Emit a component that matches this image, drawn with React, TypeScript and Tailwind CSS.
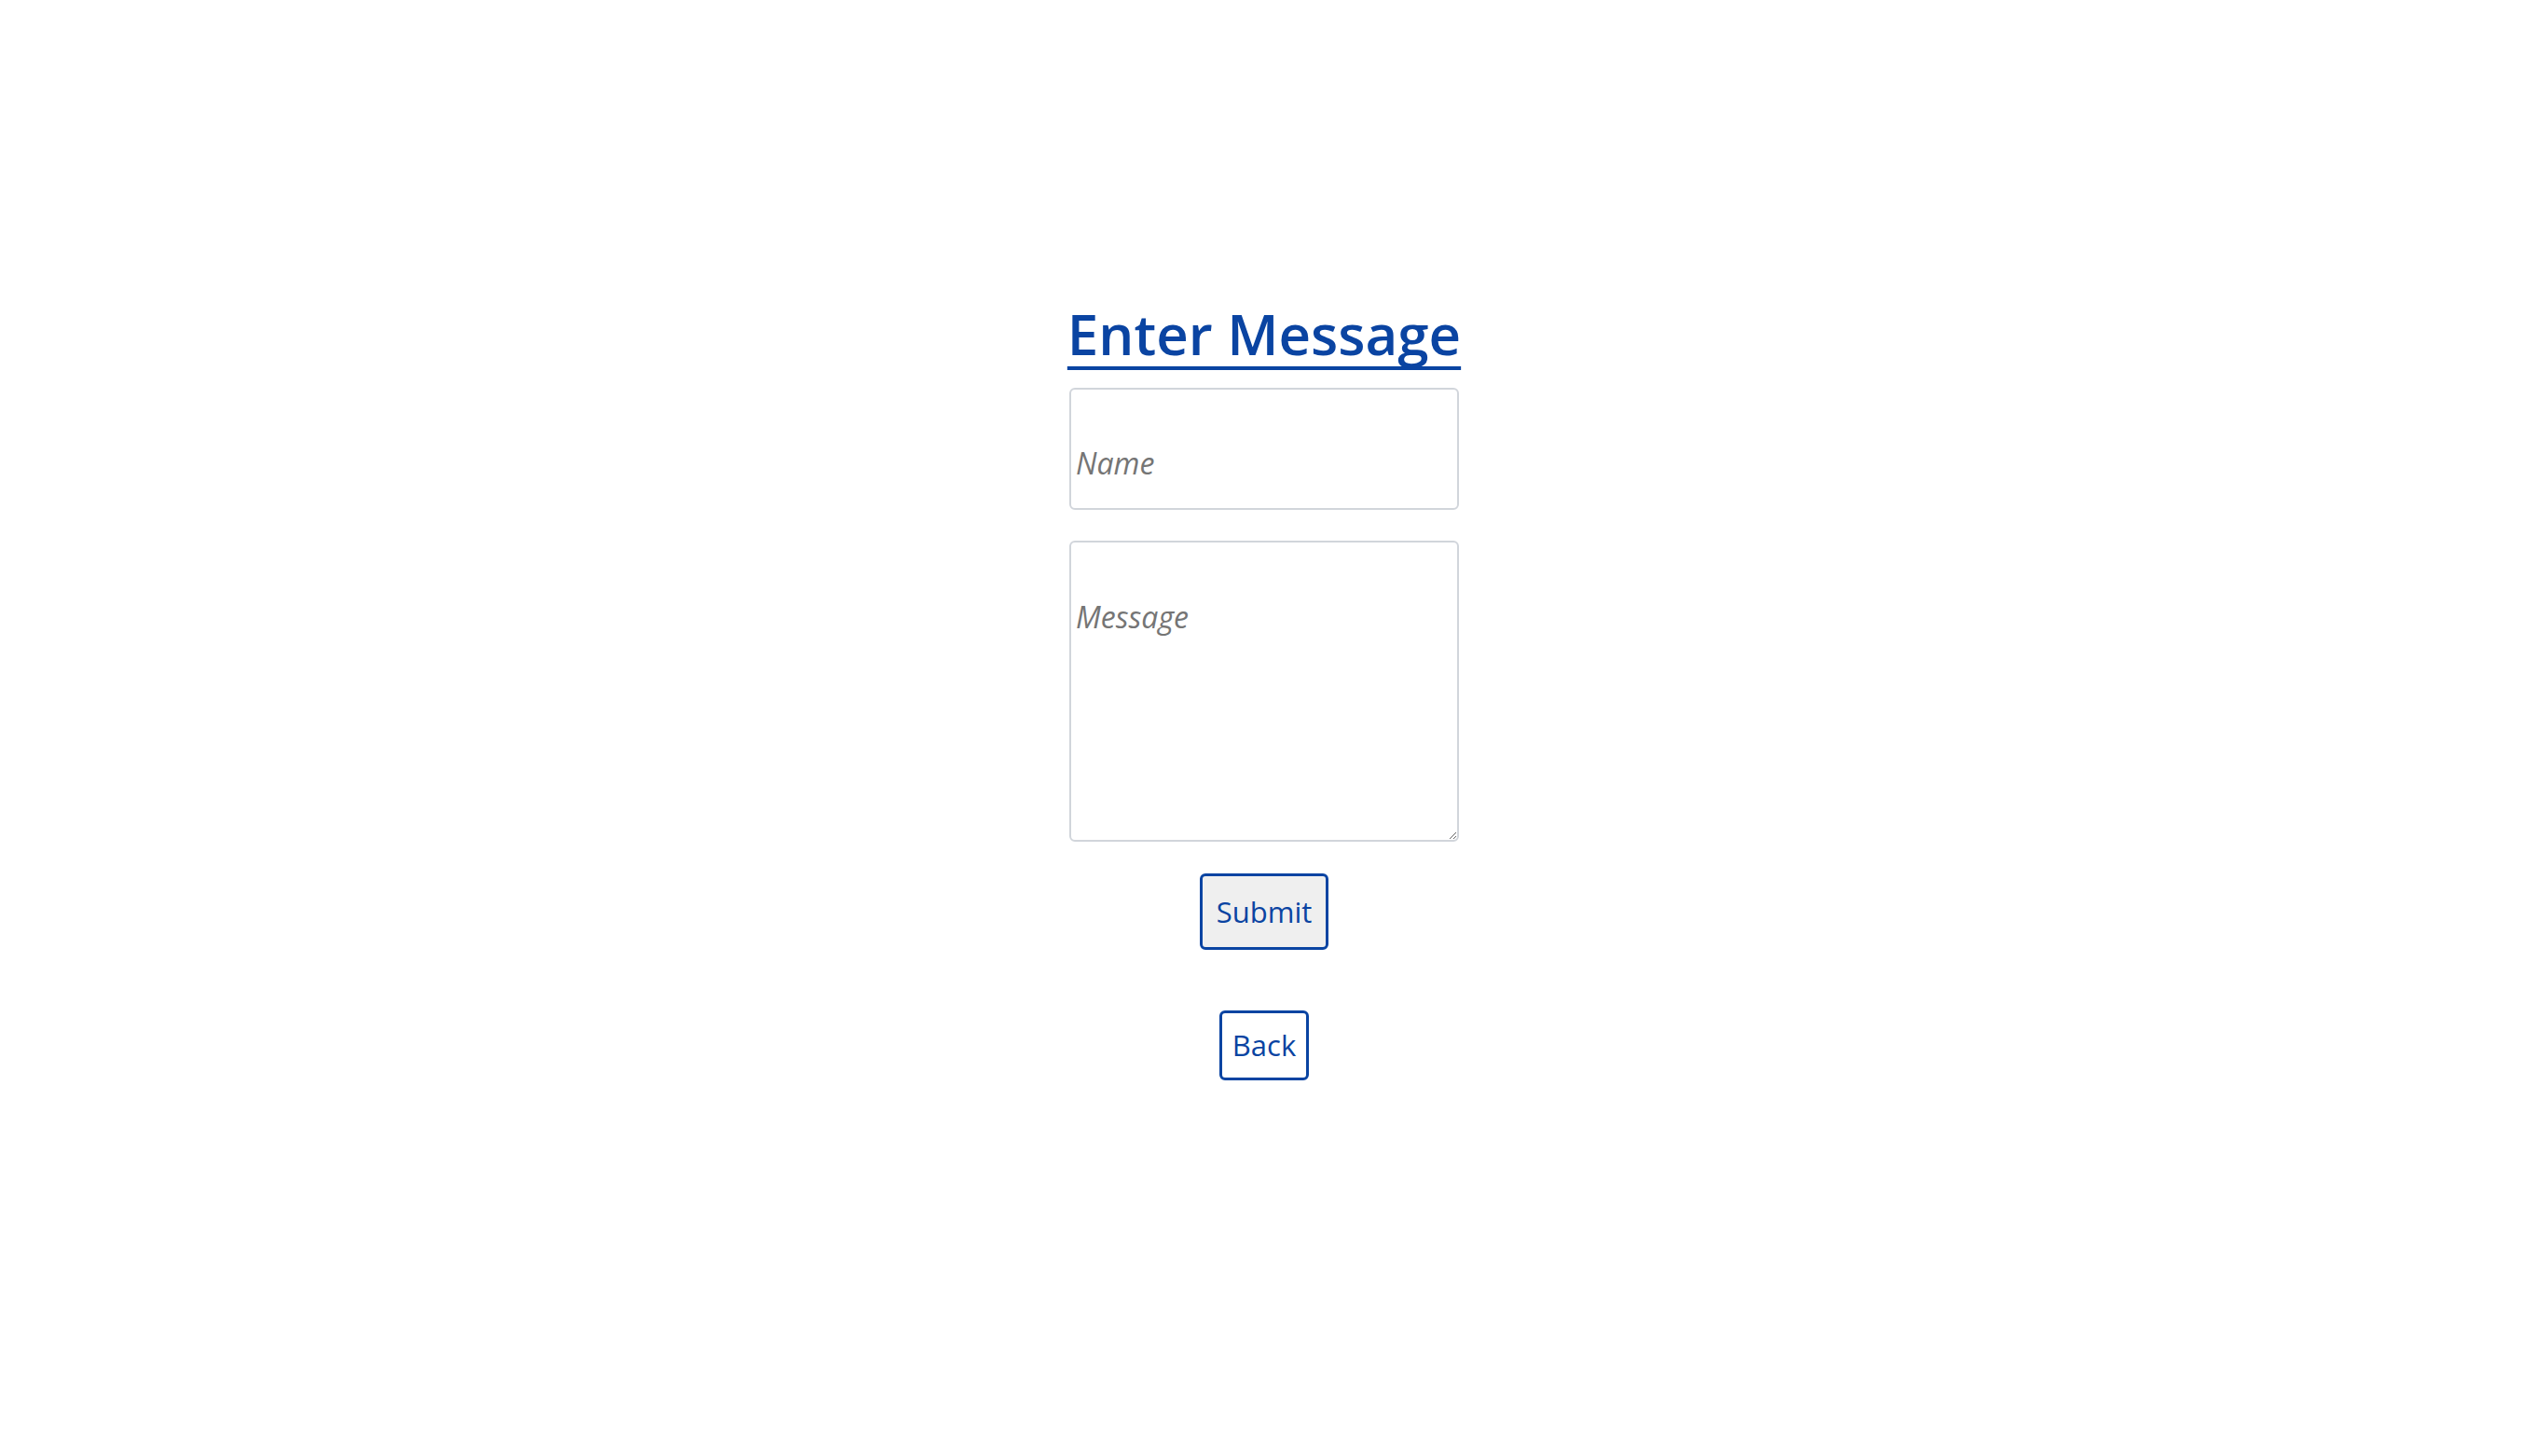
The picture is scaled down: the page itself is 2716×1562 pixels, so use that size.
const App = () => {
  return (
    <div className="min-h-screen bg-white flex flex-col items-center pt-[318px] pr-[4px] font-['Open_Sans','Noto_Sans',sans-serif]">
      <h1 className="text-[60px] leading-[80px] font-semibold text-[#0a44a2] underline decoration-4 underline-offset-[12px] [text-decoration-skip-ink:none]">
        Enter Message
      </h1>
      <form className="flex flex-col items-center mt-[18px]" onSubmit={(e) => e.preventDefault()}>
        <input
          type="text"
          placeholder="Name"
          className="w-[418px] h-[131px] border-2 border-[#d1d5db] rounded-[6px] pl-[5px] pt-[30px] text-[32px] placeholder:italic placeholder:text-[#757575] focus:outline-none"
        />
        <textarea
          placeholder="Message"
          className="w-[418px] h-[323px] mt-[33px] border-2 border-[#d1d5db] rounded-[6px] pl-[5px] pt-[56px] text-[32px] placeholder:italic placeholder:text-[#757575] focus:outline-none"
        />
        <button
          type="submit"
          className="mt-[34px] h-[82px] px-[15px] border-[3px] border-[#0a44a2] rounded-[6px] bg-[#efefef] text-[#0a44a2] text-[31px]"
        >
          Submit
        </button>
      </form>
      <button className="mt-[65px] h-[75px] px-[11px] border-[3px] border-[#0a44a2] rounded-[6px] bg-white text-[#0a44a2] text-[31px]">
        Back
      </button>
    </div>
  );
};

export default App;
